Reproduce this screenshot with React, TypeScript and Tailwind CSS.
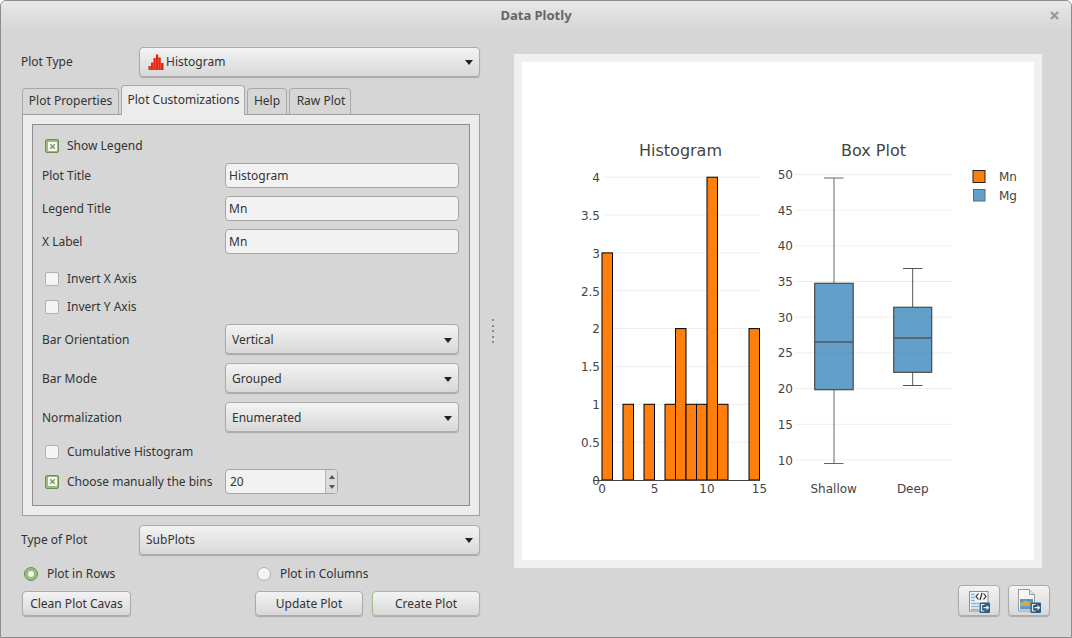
import type { ReactNode } from 'react';

const raisedBase = 'bg-linear-to-b from-[#f3f3f3] to-[#d8d8d8] border rounded-[4px] shadow-[0_1px_1px_rgba(0,0,0,0.22)]';
const raised = `${raisedBase} border-[#ababab]`;

function Arrow() {
  return <span className="ml-auto w-0 h-0 border-x-[4.5px] border-x-transparent border-t-[5px] border-t-[#222]" />;
}

function Combo({ children, className = '' }: { children: ReactNode; className?: string }) {
  return (
    <div className={`h-[30px] flex items-center pl-[6px] pr-[6px] ${raised} ${className}`}>
      {children}
      <Arrow />
    </div>
  );
}

function Check({ checked = false, label }: { checked?: boolean; label?: string }) {
  return (
    <div className="flex items-center pl-[3px]">
      {checked ? (
        <span className="w-[14px] h-[14px] rounded-[2px] border border-[#6f8c57] bg-[#9bbb7a] flex items-center justify-center">
          <svg width="9" height="9" viewBox="0 0 9 9">
            <rect width="9" height="9" rx="1" fill="#f8f8f8" />
            <path d="M2.200 2.200l4.600 4.600M6.800 2.200l-4.600 4.600" stroke="#7f9f60" strokeWidth="1.600" />
          </svg>
        </span>
      ) : (
        <span className="w-[14px] h-[14px] rounded-[2px] border border-[#b0b0b0] bg-[#f4f4f4]" />
      )}
      {label && <span className="ml-[8px]">{label}</span>}
    </div>
  );
}

function Radio({ checked = false, label }: { checked?: boolean; label: string }) {
  return (
    <div className="flex items-center">
      {checked ? (
        <span className="w-[14px] h-[14px] rounded-full border border-[#6f8c57] bg-[#9bbb7a] flex items-center justify-center">
          <span className="w-[6px] h-[6px] rounded-full bg-[#f4f4f4]" />
        </span>
      ) : (
        <span className="w-[14px] h-[14px] rounded-full border border-[#b0b0b0] bg-[#f4f4f4]" />
      )}
      <span className="ml-[9px]">{label}</span>
    </div>
  );
}

function Field({ label, value }: { label: string; value: string }) {
  return (
    <div className="flex items-center h-[25px] mt-[8px]">
      <span className="w-[183px] shrink-0">{label}</span>
      <div className="w-[234px] h-[25px] flex items-center pl-[3px] bg-[#f2f2f2] border border-[#a5a5a5] rounded-[4px]">{value}</div>
    </div>
  );
}

function ComboRow({ label, value, className = 'mt-[9px]' }: { label: string; value: string; className?: string }) {
  return (
    <div className={`flex items-center h-[30px] ${className}`}>
      <span className="w-[183px] shrink-0 pt-[2px]">{label}</span>
      <Combo className="w-[234px] pt-[2px]">{value}</Combo>
    </div>
  );
}

function Tab({ label, w }: { label: string; w: string }) {
  return (
    <div className={`h-[26px] mb-[1px] pb-[1px] flex items-center justify-center bg-[#d6d6d6] border border-b-0 border-[#a8a8a8] rounded-t-[4px] ${w}`}>
      {label}
    </div>
  );
}

function HistogramIcon() {
  return (
    <svg width="16" height="16" viewBox="0 0 16 16" className="shrink-0 mr-[2px]">
      <path d="M0.500 16v-4h2.300v4zM3 16V8.500h2.300V16zM5.500 16V4h2.300v12zM8 16V0.500h2.300V16zM10.500 16V3.500h2.300V16zM13 16V9h2.500v7z" fill="#e3290e" />
    </svg>
  );
}

function ExportBadge({ x }: { x: number }) {
  return (
    <g transform={`translate(${x} 13.500)`}>
      <rect width="10.500" height="10.500" rx="1" fill="#2f5b7c" />
      <path d="M5 2H2v6.500h3" stroke="#e8eef2" strokeWidth="1.200" fill="none" />
      <path d="M4 5.200h5M7 3.200l2 2-2 2" stroke="#e8eef2" strokeWidth="1.200" fill="none" />
    </g>
  );
}

function SourceIcon() {
  return (
    <svg width="26" height="24" viewBox="0 0 26 24">
      <rect x="3.500" y="2.500" width="18.500" height="19.500" fill="#f5f5f5" stroke="#8f8f8f" />
      <path d="M5 5.500h4M5 8.500h4M5 11.500h4M5 14.500h8M5 17.500h8M5 20.500h8" stroke="#8db4dc" strokeWidth="1.500" />
      <path d="M12.500 4.500l-2.500 3 2.500 3M17.500 4.500l2.500 3-2.500 3M16 4l-2 7" stroke="#222" strokeWidth="1.100" fill="none" />
      <ExportBadge x={13.500} />
    </svg>
  );
}

function ImageIcon() {
  return (
    <svg width="26" height="24" viewBox="0 0 26 24">
      <path d="M2.500 0.500h11l5 5v16.500h-16z" fill="#f7f7f7" stroke="#9a9a9a" />
      <path d="M13.500 0.500v5h5" fill="#e2e2e2" stroke="#9a9a9a" />
      <rect x="4" y="10" width="13" height="4" fill="#4f97cf" />
      <path d="M4 14l5-2.500 8 2.500v3H4z" fill="#c9ae55" />
      <rect x="4" y="17" width="13" height="3.500" fill="#5d9ccb" />
      <ExportBadge x={14.500} />
    </svg>
  );
}

const axisText = '#444444';
const histBars: [number, number][] = [[0, 3], [2, 1], [4, 1], [6, 1], [7, 2], [8, 1], [9, 1], [10, 4], [11, 1], [14, 2]];
const histX = (v: number) => 602 + v * 10.5;
const histY = (v: number) => 480 - v * 75.7;
const boxY = (v: number) => 460 - (v - 10) * 7.14;

function Chart() {
  return (
    <svg viewBox="522 62 512 498" width="512" height="498" fontFamily="'DejaVu Sans', sans-serif" fontSize="12" fill={axisText}>
      <text x="680.500" y="156" textAnchor="middle" fontSize="16">Histogram</text>
      <text x="873.500" y="156" textAnchor="middle" fontSize="16">Box Plot</text>

      {[0.5, 1, 1.5, 2, 2.5, 3, 3.5, 4].map((v) => (
        <line key={v} x1="602" x2="760" y1={histY(v)} y2={histY(v)} stroke="#eeeeee" />
      ))}
      {[0, 0.5, 1, 1.5, 2, 2.5, 3, 3.5, 4].map((v) => (
        <text key={v} x="600" y={histY(v) + 4.800} textAnchor="end">{v}</text>
      ))}
      {histBars.map(([x, v]) => (
        <rect key={x} x={histX(x)} y={histY(v)} width="10.500" height={480 - histY(v)} fill="#ff7f0e" stroke="#000" strokeWidth="1" />
      ))}
      <line x1="593" x2="760" y1="480.500" y2="480.500" stroke="#444" />
      {[0, 5, 10, 15].map((v) => (
        <text key={v} x={histX(v)} y="493" textAnchor="middle">{v}</text>
      ))}

      {[10, 15, 20, 25, 30, 35, 40, 45, 50].map((v) => (
        <g key={v}>
          <line x1="795" x2="952" y1={boxY(v)} y2={boxY(v)} stroke="#eeeeee" />
          <text x="793" y={boxY(v) + 4.500} textAnchor="end">{v}</text>
        </g>
      ))}

      <g stroke="#555" strokeWidth="1" fill="none">
        <path d="M824 178h19.500M834 178V283M834 390V463.500M824 463.500h19.500" stroke="#666" />
        <rect x="814.700" y="283.300" width="38.500" height="106.400" fill="#1f77b4" fillOpacity="0.7" stroke="#4a4a4a" strokeWidth="1.200" />
        <path d="M814.700 342h38.500" strokeWidth="1.500" />
        <path d="M903 268.500h19.500M912.700 268.500V307M912.700 372.500V385.500M903 385.500h19.500" />
        <rect x="893.700" y="307.300" width="38" height="65" fill="#1f77b4" fillOpacity="0.7" stroke="#4a4a4a" strokeWidth="1.200" />
        <path d="M893.700 338h38" strokeWidth="1.500" />
      </g>
      <text x="833.700" y="493" textAnchor="middle">Shallow</text>
      <text x="912.700" y="493" textAnchor="middle">Deep</text>

      <rect x="973" y="170.500" width="12" height="12" fill="#ff7f0e" stroke="#222" />
      <rect x="973.500" y="189.500" width="11.500" height="11.500" fill="#629fca" stroke="#666" />
      <text x="999" y="181">Mn</text>
      <text x="999" y="200">Mg</text>
    </svg>
  );
}

export default function App() {
  return (
    <div className="w-[1072px] h-[638px] flex flex-col border border-[#8c8c8c] rounded-t-[6px] bg-[#d6d6d6] text-[#333] text-[12px] leading-none overflow-hidden font-['Noto_Sans',sans-serif]">
      {/* Title bar */}
      <div className="h-[29px] shrink-0 flex items-center bg-linear-to-b from-[#e8e8e8] to-[#d6d6d6]">
        <span className="w-[36px]" />
        <span className="flex-1 text-center font-bold text-[13px] text-[#666]">Data Plotly</span>
        <span className="w-[36px] flex justify-end pr-[12px]">
          <svg width="9" height="9" viewBox="0 0 9 9">
            <path d="M1 1l7 7M8 1l-7 7" stroke="#9a9a9a" strokeWidth="2.400" />
          </svg>
        </span>
      </div>

      <div className="flex flex-1">
        {/* Left panel */}
        <div className="w-[459px] ml-[20px] mt-[17px] shrink-0">
          <div className="flex items-center">
            <span className="w-[118px]">Plot Type</span>
            <Combo className="w-[341px] pl-[8px]">
              <HistogramIcon />
              Histogram
            </Combo>
          </div>

          <div className="flex items-end h-[30px] mt-[8px] ml-[1px] -mb-[1px] gap-[2px]">
            <Tab label="Plot Properties" w="w-[97px]" />
            <div className="relative z-10 w-[124px] h-[30px] flex items-center justify-center bg-[#ececec] border border-b-0 border-[#a8a8a8] rounded-t-[4px] pb-[2px] pl-[1px]">
              Plot Customizations
            </div>
            <Tab label="Help" w="w-[40px]" />
            <Tab label="Raw Plot" w="w-[62px] pl-[2px]" />
          </div>

          <div className="ml-[1px] h-[402px] p-[9px] bg-[#ececec] border border-[#a0a0a0]">
            <div className="h-[382px] px-[9px] pt-[11px] bg-[#d6d6d6] border border-[#8e8e8e]">
              <div className="h-[20px] flex items-center"><Check checked label="Show Legend" /></div>
              <div className="-mt-[1px]">
                <Field label="Plot Title" value="Histogram" />
              </div>
              <Field label="Legend Title" value="Mn" />
              <Field label="X Label" value="Mn" />
              <div className="h-[20px] flex items-center mt-[15px]"><Check label="Invert X Axis" /></div>
              <div className="h-[20px] flex items-center mt-[8px]"><Check label="Invert Y Axis" /></div>
              <ComboRow label="Bar Orientation" value="Vertical" className="mt-[7px]" />
              <ComboRow label="Bar Mode" value="Grouped" />
              <ComboRow label="Normalization" value="Enumerated" />
              <div className="h-[20px] flex items-center mt-[10px]"><Check label="Cumulative Histogram" /></div>
              <div className="h-[25px] flex items-center mt-[7px]">
                <div className="w-[183px] shrink-0"><Check checked label="Choose manually the bins" /></div>
                <div className="w-[113px] h-[25px] flex bg-[#f2f2f2] border border-[#a5a5a5] rounded-[4px] overflow-hidden">
                  <span className="flex-1 flex items-center pl-[4px]">20</span>
                  <span className="w-[12px] flex flex-col items-center justify-center gap-[6px] bg-[#dcdcdc] border-l border-[#b5b5b5]">
                    <span className="w-0 h-0 border-x-[3px] border-x-transparent border-b-[4px] border-b-[#555]" />
                    <span className="w-0 h-0 border-x-[3px] border-x-transparent border-t-[4px] border-t-[#555]" />
                  </span>
                </div>
              </div>
            </div>
          </div>

          <div className="flex items-center mt-[9px]">
            <span className="w-[118px]">Type of Plot</span>
            <Combo className="w-[341px]">SubPlots</Combo>
          </div>

          <div className="flex items-center h-[20px] mt-[9px] pl-[3px]">
            <div className="w-[233px]"><Radio checked label="Plot in Rows" /></div>
            <Radio label="Plot in Columns" />
          </div>

          <div className="flex items-center mt-[7px] ml-[1px]">
            <div className={`w-[109px] h-[25px] flex items-center justify-center ${raised}`}>Clean Plot Cavas</div>
            <div className={`w-[108px] h-[25px] ml-[124px] flex items-center justify-center ${raised}`}>Update Plot</div>
            <div className={`w-[108px] h-[25px] ml-[9px] flex items-center justify-center ${raisedBase} border-[#a3bd8c]`}>Create Plot</div>
          </div>
        </div>

        {/* Splitter */}
        <div className="w-[34px] shrink-0 flex flex-col items-center justify-center gap-[3.500px] pb-[5px] pr-[8px]">
          {[0, 1, 2, 3, 4].map((i) => (
            <span key={i} className="w-[2px] h-[2px] bg-[#8a8a8a]" />
          ))}
        </div>

        {/* Plot area */}
        <div className="w-[536px] mt-[24px] shrink-0">
          <div className="w-[528px] h-[514px] p-[8px] bg-[#f0f0f0]">
            <div className="w-[512px] h-[498px] bg-white"><Chart /></div>
          </div>
          <div className="flex justify-end gap-[8px] mt-[17px]">
            <div className={`w-[42px] h-[31px] flex items-center justify-center ${raised}`}><SourceIcon /></div>
            <div className={`w-[42px] h-[31px] flex items-center justify-center ${raised}`}><ImageIcon /></div>
          </div>
        </div>
      </div>
    </div>
  );
}
